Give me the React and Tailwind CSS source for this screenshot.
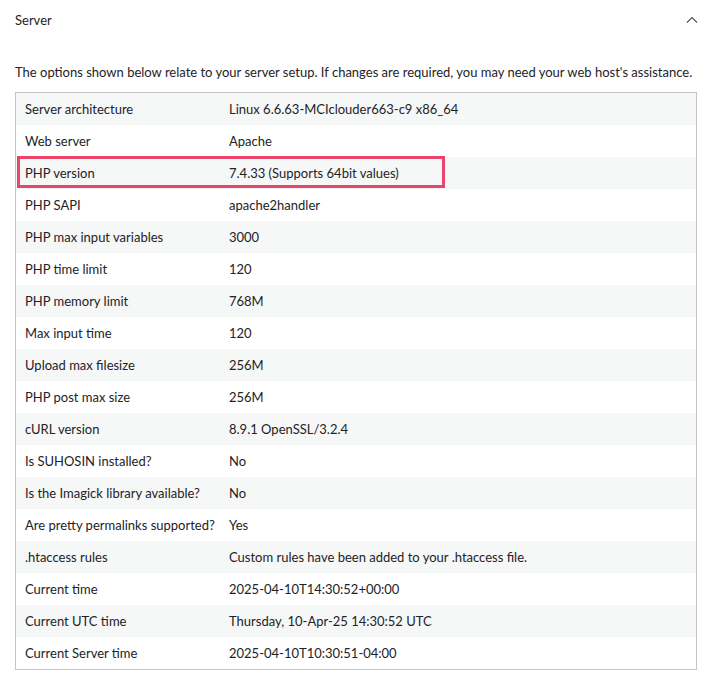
import React from "react";

const rows = [
  ["Server architecture", "Linux 6.6.63-MCIclouder663-c9 x86_64"],
  ["Web server", "Apache"],
  ["PHP version", "7.4.33 (Supports 64bit values)"],
  ["PHP SAPI", "apache2handler"],
  ["PHP max input variables", "3000"],
  ["PHP time limit", "120"],
  ["PHP memory limit", "768M"],
  ["Max input time", "120"],
  ["Upload max filesize", "256M"],
  ["PHP post max size", "256M"],
  ["cURL version", "8.9.1 OpenSSL/3.2.4"],
  ["Is SUHOSIN installed?", "No"],
  ["Is the Imagick library available?", "No"],
  ["Are pretty permalinks supported?", "Yes"],
  [".htaccess rules", "Custom rules have been added to your .htaccess file."],
  ["Current time", "2025-04-10T14:30:52+00:00"],
  ["Current UTC time", "Thursday, 10-Apr-25 14:30:52 UTC"],
  ["Current Server time", "2025-04-10T10:30:51-04:00"],
];

export default function App() {
  return (
    <div className="bg-white w-[713px] h-[676px] text-[13px] leading-[18px] text-[#1d2327]" style={{ fontFamily: 'Lato, "Noto Sans", sans-serif' }}>
      {/* header */}
      <div className="flex items-center justify-between h-[39px] pl-[15px] pr-[14px]">
        <span>Server</span>
        <svg width="14" height="14" viewBox="0 0 14 14" fill="none" stroke="#50575e" strokeWidth="1.2">
          <path d="M2 9.5 L7 4.5 L12 9.5" />
        </svg>
      </div>

      <p className="mt-[24px] pl-[15px] whitespace-nowrap">
        The options shown below relate to your server setup. If changes are required, you may need your web host's assistance.
      </p>

      {/* table */}
      <div className="relative mt-[11px] ml-[15px] w-[682px] border border-[#c3c4c7]">
        {rows.map(([k, v], i) => (
          <div key={k} className={`flex items-center h-[32px] whitespace-nowrap ${i % 2 === 0 ? "bg-[#f6f7f7]" : "bg-white"}`}>
            <div className="w-[213px] shrink-0 pl-[9px]">{k}</div>
            <div>{v}</div>
          </div>
        ))}
        {/* highlight */}
        <div className="absolute left-[1px] top-[63px] w-[428px] h-[32px] border-[3px] border-[#e9446a] pointer-events-none" />
      </div>
    </div>
  );
}
